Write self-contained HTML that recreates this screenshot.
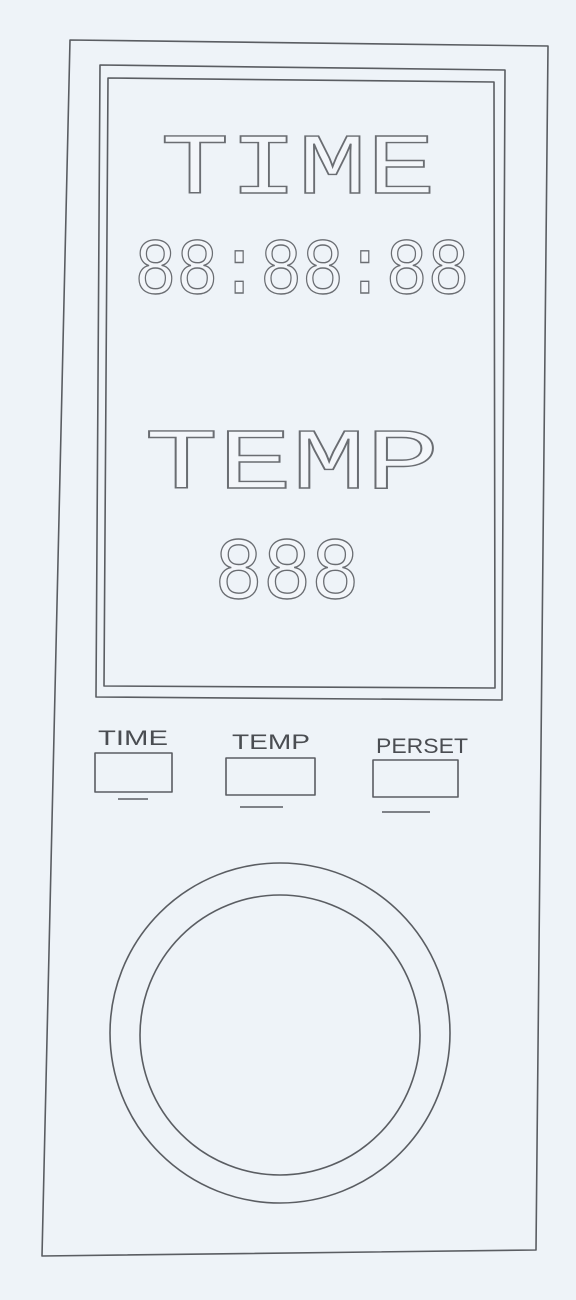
<!DOCTYPE html>
<html><head><meta charset="utf-8"><style>
html,body{margin:0;padding:0;background:#eef3f8;}
svg{display:block}
</style></head><body>
<svg width="576" height="1300" viewBox="0 0 576 1300" xmlns="http://www.w3.org/2000/svg">
<rect width="576" height="1300" fill="#eef3f8"/>
<g fill="none" stroke="#5a5d62" stroke-width="1.6" stroke-linejoin="round">
<polygon points="70,40 548,46 536,1250 42,1256"/>
<polygon points="100,65 505,70 502,700 96,697"/>
<polygon points="108,78 494,82 495,688 104,686"/>
<line x1="118" y1="799" x2="148" y2="799"/>
<line x1="240" y1="807" x2="283" y2="807"/>
<line x1="382" y1="812" x2="430" y2="812"/>
<rect x="95" y="753" width="77" height="39"/>
<rect x="226" y="758" width="89" height="37"/>
<rect x="373" y="760" width="85" height="37"/>
<circle cx="280" cy="1033" r="170"/>
<circle cx="280" cy="1035" r="140"/>
</g>
<g font-family="Liberation Mono, monospace" fill="#f3f6fa" stroke="#6a6d72" stroke-width="1.4" text-anchor="middle">
<text x="298" y="193" font-size="86" textLength="275" lengthAdjust="spacingAndGlyphs">TIME</text>
<text x="302" y="293" font-size="80" textLength="335" lengthAdjust="spacingAndGlyphs">88:88:88</text>
<text x="292" y="488" font-size="86" textLength="295" lengthAdjust="spacingAndGlyphs">TEMP</text>
<text x="287" y="598" font-size="88" textLength="145" lengthAdjust="spacingAndGlyphs">888</text>
</g>
<g font-family="Liberation Sans, sans-serif" fill="#4a4d52" font-size="21">
<text x="98" y="745" textLength="70" lengthAdjust="spacingAndGlyphs">TIME</text>
<text x="232" y="749" textLength="78" lengthAdjust="spacingAndGlyphs">TEMP</text>
<text x="376" y="753" textLength="92" lengthAdjust="spacingAndGlyphs">PERSET</text>
</g>
</svg>
</body></html>
